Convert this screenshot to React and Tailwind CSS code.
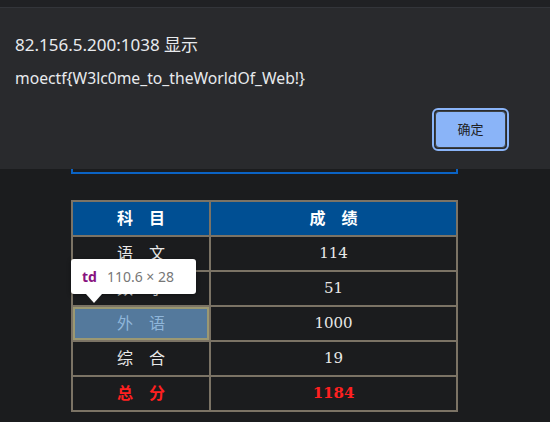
import React from "react";

const rows = [
    { name: "语　文", score: "114" },
    { name: "数　学", score: "51" },
    { name: "外　语", score: "1000", hover: true },
    { name: "综　合", score: "19" },
];

const cell = "border-2 border-[#7b7365] h-[35px] p-0 text-center";

export default function App() {
    return (
        <div className="relative w-[550px] h-[422px] overflow-hidden bg-[#1b1c1e] font-['DejaVu_Serif','Noto_Sans_CJK_SC',serif] text-[15px] text-[#e8e8e8]">
            {/* page */}
            <div className="ml-[71px] mt-[100px] h-[74px] w-[387px] border-2 border-[#0b63c4]" />

            <table className="ml-[71px] mt-[26px] w-[387px] border-collapse border-2 border-[#7b7365]">
                <thead>
                    <tr className="bg-[#004f93] font-bold text-white">
                        <th className={`${cell} w-[138px] text-[16px]`}>科　目</th>
                        <th className={`${cell} text-[16px]`}>成　绩</th>
                    </tr>
                </thead>
                <tbody>
                    {rows.map((r) => (
                        <tr key={r.score}>
                            <td
                                className={`${cell} text-[16px] ${
                                    r.hover
                                        ? "bg-[#54799c] text-[#8fb6da] shadow-[inset_0_0_0_2px_#9b9872]"
                                        : ""
                                }`}
                            >
                                {r.name}
                            </td>
                            <td className={cell}>{r.score}</td>
                        </tr>
                    ))}
                    <tr className="font-bold text-[#ff2020]">
                        <td className={`${cell} text-[16px]`}>总　分</td>
                        <td className={cell}>1184</td>
                    </tr>
                </tbody>
            </table>

            {/* devtools tooltip */}
            <div className="absolute left-[71px] top-[259px] flex h-[35px] w-[125px] items-center gap-[10px] rounded-[3px] bg-white pl-[11px] font-['Noto_Sans',sans-serif] text-[14px] shadow-[0_1px_4px_rgba(0,0,0,0.4)]">
                <span className="font-bold text-[#881280]">td</span>
                <span className="text-[#777]">110.6 × 28</span>
                <div className="absolute left-[15px] top-[35px] h-0 w-0 border-x-[8px] border-t-[9px] border-x-transparent border-t-white" />
            </div>

            {/* alert dialog */}
            <div className="absolute left-0 top-0 w-full font-['Noto_Sans','Noto_Sans_CJK_SC',sans-serif]">
                <div className="h-[7px] bg-[#202124]" />
                <div className="h-[162px] border-t border-[#33353a] bg-[#292a2d] px-[15px] pt-[24px]">
                    <div className="text-[17px] leading-[26px] text-[#e8eaed]">
                        82.156.5.200:1038 显示
                    </div>
                    <div className="mt-[9px] text-[15.7px] leading-[22px] text-[#e8eaed]">
                        moectf{"{"}W3lc0me_to_theWorldOf_Web!{"}"}
                    </div>
                    <div className="mt-[19px] flex justify-end pr-[26px]">
                        <div className="rounded-[6px] border-2 border-[#8ab4f8] p-[1px]">
                            <button className="h-[37px] w-[71px] rounded-[4px] border border-[#3c4043] bg-[#8ab4f8] text-[13px] text-[#202124]">
                                确定
                            </button>
                        </div>
                    </div>
                </div>
            </div>
        </div>
    );
}
